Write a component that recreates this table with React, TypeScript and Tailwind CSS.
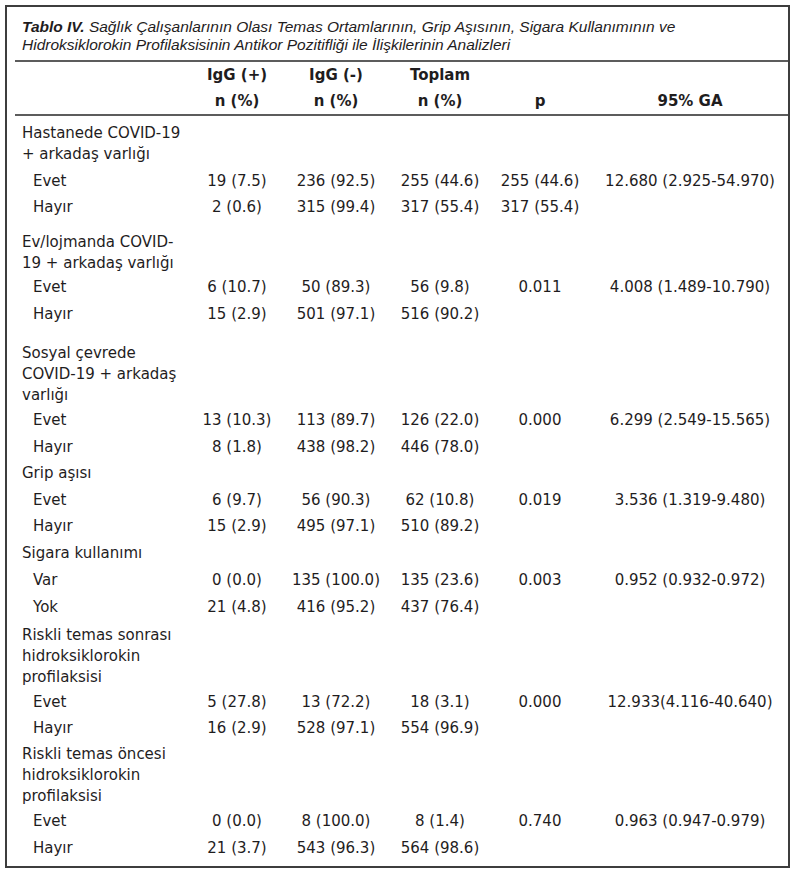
import React from "react";

type Group = {
  label: string[];
  gap: string;
  labelGap: string;
  rows: string[][];
};

const groups: Group[] = [
  {
    label: ["Hastanede COVID-19", "+ arkadaş varlığı"],
    gap: "mt-[7px]",
    labelGap: "mb-[2.5px]",
    rows: [
      ["Evet", "19 (7.5)", "236 (92.5)", "255 (44.6)", "255 (44.6)", "12.680 (2.925-54.970)"],
      ["Hayır", "2 (0.6)", "315 (99.4)", "317 (55.4)", "317 (55.4)", ""],
    ],
  },
  {
    label: ["Ev/lojmanda COVID-", "19 + arkadaş varlığı"],
    gap: "mt-[11.5px]",
    labelGap: "mb-0",
    rows: [
      ["Evet", "6 (10.7)", "50 (89.3)", "56 (9.8)", "0.011", "4.008 (1.489-10.790)"],
      ["Hayır", "15 (2.9)", "501 (97.1)", "516 (90.2)", "", ""],
    ],
  },
  {
    label: ["Sosyal çevrede", "COVID-19 + arkadaş", "varlığı"],
    gap: "mt-[15.5px]",
    labelGap: "mb-[1.5px]",
    rows: [
      ["Evet", "13 (10.3)", "113 (89.7)", "126 (22.0)", "0.000", "6.299 (2.549-15.565)"],
      ["Hayır", "8 (1.8)", "438 (98.2)", "446 (78.0)", "", ""],
    ],
  },
  {
    label: ["Grip aşısı"],
    gap: "mt-[3px]",
    labelGap: "mb-[2.5px]",
    rows: [
      ["Evet", "6 (9.7)", "56 (90.3)", "62 (10.8)", "0.019", "3.536 (1.319-9.480)"],
      ["Hayır", "15 (2.9)", "495 (97.1)", "510 (89.2)", "", ""],
    ],
  },
  {
    label: ["Sigara kullanımı"],
    gap: "mt-[3.5px]",
    labelGap: "mb-[3px]",
    rows: [
      ["Var", "0 (0.0)", "135 (100.0)", "135 (23.6)", "0.003", "0.952 (0.932-0.972)"],
      ["Yok", "21 (4.8)", "416 (95.2)", "437 (76.4)", "", ""],
    ],
  },
  {
    label: ["Riskli temas sonrası", "hidroksiklorokin", "profilaksisi"],
    gap: "mt-[5px]",
    labelGap: "mb-[0.5px]",
    rows: [
      ["Evet", "5 (27.8)", "13 (72.2)", "18 (3.1)", "0.000", "12.933(4.116-40.640)"],
      ["Hayır", "16 (2.9)", "528 (97.1)", "554 (96.9)", "", ""],
    ],
  },
  {
    label: ["Riskli temas öncesi", "hidroksiklorokin", "profilaksisi"],
    gap: "mt-[2.5px]",
    labelGap: "mb-[1px]",
    rows: [
      ["Evet", "0 (0.0)", "8 (100.0)", "8 (1.4)", "0.740", "0.963 (0.947-0.979)"],
      ["Hayır", "21 (3.7)", "543 (96.3)", "564 (98.6)", "", ""],
    ],
  },
];

const cols = "grid grid-cols-[180px_100px_98px_110px_90px_1fr]";

function Rule() {
  return <div className="ml-[8px] h-[2px] bg-[#5c5c5c]" />;
}

export default function App() {
  return (
    <div className="bg-white min-h-[874px] pt-[5px] pl-[5px]">
      <div className="w-[785px] border-2 border-[#3d3d3d] text-[15px] text-[#1f1d1e] font-['DejaVu_Sans',sans-serif]">
        {/* title */}
        <div className="pt-[11px] pb-[6px] pl-[15px] italic text-[15.5px] leading-[18px] font-['Liberation_Sans',sans-serif]">
          <div>
            <span className="font-bold">Tablo IV.</span> Sağlık Çalışanlarının Olası Temas Ortamlarının, Grip Aşısının, Sigara Kullanımının ve
          </div>
          <div>Hidroksiklorokin Profilaksisinin Antikor Pozitifliği ile İlişkilerinin Analizleri</div>
        </div>
        <Rule />

        {/* column heads */}
        <div className="font-bold leading-[26px]">
          <div className={cols}>
            <div />
            <div className="text-center">IgG (+)</div>
            <div className="text-center">IgG (-)</div>
            <div className="text-center">Toplam</div>
            <div />
            <div />
          </div>
          <div className={cols}>
            <div />
            <div className="text-center">n (%)</div>
            <div className="text-center">n (%)</div>
            <div className="text-center">n (%)</div>
            <div className="text-center">p</div>
            <div className="text-center pl-[7px]">95% GA</div>
          </div>
        </div>
        <Rule />

        {/* body */}
        <div className="pb-[5px]">
          {groups.map((g) => (
            <div key={g.label.join(" ")} className={g.gap}>
              <div className={`pl-[15px] leading-[21px] ${g.labelGap}`}>
                {g.label.map((l) => (
                  <div key={l}>{l}</div>
                ))}
              </div>
              {g.rows.map((r) => (
                <div key={r[0]} className={`${cols} h-[26.5px] leading-[26.5px] whitespace-nowrap`}>
                  <div className="pl-[26px]">{r[0]}</div>
                  <div className="text-center">{r[1]}</div>
                  <div className="text-center">{r[2]}</div>
                  <div className="text-center">{r[3]}</div>
                  <div className="text-center">{r[4]}</div>
                  <div className="text-center pl-[7px]">{r[5]}</div>
                </div>
              ))}
            </div>
          ))}
        </div>
      </div>
    </div>
  );
}
